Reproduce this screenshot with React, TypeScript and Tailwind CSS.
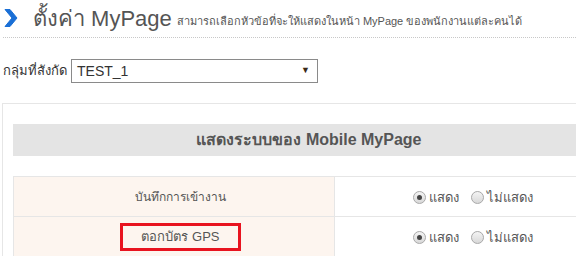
import React from 'react';

const rows = [
    { label: 'บันทึกการเข้างาน', highlight: false },
    { label: 'ตอกบัตร GPS', highlight: true },
];

const Radio: React.FC<{ checked?: boolean }> = ({ checked }) => (
    <span className="inline-flex h-[13px] w-[13px] items-center justify-center rounded-full border border-[#a9a9a9] bg-gradient-to-b from-[#f4f4f4] to-[#d8d8d8]">
        {checked && <span className="h-[5px] w-[5px] rounded-full bg-[#444]" />}
    </span>
);

const App: React.FC = () => {
    return (
        <div className="h-[256px] w-[576px] overflow-hidden bg-white font-['Tahoma','Liberation_Sans',sans-serif] text-[#555]">
            {/* Header */}
            <div className="ml-[3px] flex h-[38px] items-center whitespace-nowrap border-b border-dotted border-[#c8c8c8]">
                <svg width="14" height="20" viewBox="0 0 14 20" className="ml-[1px] mt-[-2px] shrink-0">
                    <path d="M1 1.5 L6 1.5 L13 10 L6 18.5 L1 18.5 L8 10 Z" fill="#1a6fd6" strokeLinejoin="round" stroke="#1a6fd6" strokeWidth="1" />
                </svg>
                <span className="ml-[15px] shrink-0 text-[22px] leading-none text-[#555]">ตั้งค่า MyPage</span>
                <span className="ml-[5px] mt-[5px] text-[11px] text-[#555]">
                    สามารถเลือกหัวข้อที่จะให้แสดงในหน้า MyPage ของพนักงานแต่ละคนได้
                </span>
            </div>

            {/* Group select */}
            <div className="ml-[3px] mt-[21px] flex items-center">
                <label className="text-[13px] text-[#333]">กลุ่มที่สังกัด</label>
                <div className="ml-[4px] flex h-[24px] w-[247px] items-center justify-between border border-[#8a8a8a] px-[5px]">
                    <span className="text-[14px] text-[#333]">TEST_1</span>
                    <span className="mr-[2px] text-[9px] text-[#3b2a18]">▼</span>
                </div>
            </div>

            {/* Panel */}
            <div className="ml-[2px] mt-[20px] w-[614px] border border-[#e6e6e6] px-[10px] pt-[20px]">
                <div className="flex h-[32px] items-center justify-center bg-[#e4e4e4] text-[16px] font-bold text-[#555]">
                    แสดงระบบของ Mobile MyPage
                </div>
                <table className="mt-[20px] w-full border-collapse text-[13px]">
                    <tbody>
                        {rows.map((r) => (
                            <tr key={r.label} className="h-[40px]">
                                <td className="w-[321px] border border-[#e6e6e6] bg-[#fdf5ef] pl-[13px] text-center">
                                    {r.highlight ? (
                                        <span className="inline-flex h-[28px] w-[121px] items-center justify-center border-[3px] border-[#e8131f]">
                                            {r.label}
                                        </span>
                                    ) : (
                                        <span className="text-[12px]">{r.label}</span>
                                    )}
                                </td>
                                <td className="border border-[#e6e6e6] text-center">
                                    <span className="ml-[6px] inline-flex items-center gap-[3px]">
                                        <Radio checked />
                                        <span>แสดง</span>
                                        <span className="ml-[6px]" />
                                        <Radio />
                                        <span>ไม่แสดง</span>
                                    </span>
                                </td>
                            </tr>
                        ))}
                    </tbody>
                </table>
            </div>
        </div>
    );
};

export default App;
